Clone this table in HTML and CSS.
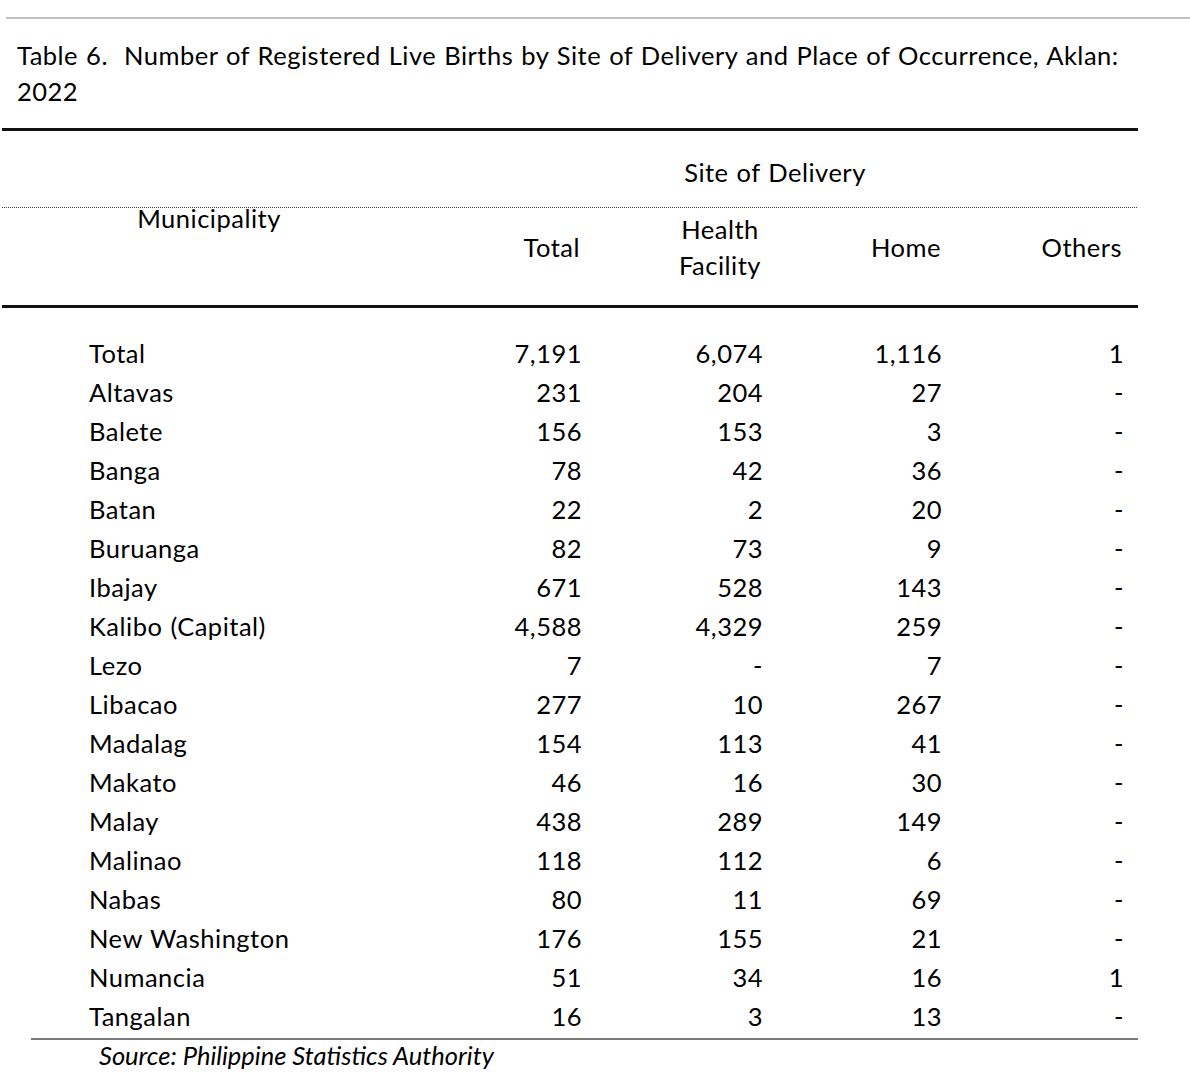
FILE: index.html
```html
<!DOCTYPE html>
<html lang="en">
<head>
<meta charset="utf-8">
<title>Table 6. Registered Live Births, Aklan 2022</title>
<link rel="stylesheet" href="styles.css">
</head>
<body>
<div class="page">
  <div class="top-rule"></div>
  <h1 class="title">Table 6.&nbsp; Number of Registered Live Births by Site of Delivery and Place of Occurrence, Aklan:<br>2022</h1>
  <div class="table">
    <div class="head">
      <div class="h-muni">Municipality</div>
      <div class="h-group">Site of Delivery</div>
      <div class="h-col h-total">Total</div>
      <div class="h-col h-health">Health<br>Facility</div>
      <div class="h-col h-home">Home</div>
      <div class="h-col h-others">Others</div>
    </div>
    <div class="body">
      <div class="row"><span class="name">Total</span><span class="c1">7,191</span><span class="c2">6,074</span><span class="c3">1,116</span><span class="c4">1</span></div>
      <div class="row"><span class="name">Altavas</span><span class="c1">231</span><span class="c2">204</span><span class="c3">27</span><span class="c4">-</span></div>
      <div class="row"><span class="name">Balete</span><span class="c1">156</span><span class="c2">153</span><span class="c3">3</span><span class="c4">-</span></div>
      <div class="row"><span class="name">Banga</span><span class="c1">78</span><span class="c2">42</span><span class="c3">36</span><span class="c4">-</span></div>
      <div class="row"><span class="name">Batan</span><span class="c1">22</span><span class="c2">2</span><span class="c3">20</span><span class="c4">-</span></div>
      <div class="row"><span class="name">Buruanga</span><span class="c1">82</span><span class="c2">73</span><span class="c3">9</span><span class="c4">-</span></div>
      <div class="row"><span class="name">Ibajay</span><span class="c1">671</span><span class="c2">528</span><span class="c3">143</span><span class="c4">-</span></div>
      <div class="row"><span class="name">Kalibo (Capital)</span><span class="c1">4,588</span><span class="c2">4,329</span><span class="c3">259</span><span class="c4">-</span></div>
      <div class="row"><span class="name">Lezo</span><span class="c1">7</span><span class="c2">-</span><span class="c3">7</span><span class="c4">-</span></div>
      <div class="row"><span class="name">Libacao</span><span class="c1">277</span><span class="c2">10</span><span class="c3">267</span><span class="c4">-</span></div>
      <div class="row"><span class="name">Madalag</span><span class="c1">154</span><span class="c2">113</span><span class="c3">41</span><span class="c4">-</span></div>
      <div class="row"><span class="name">Makato</span><span class="c1">46</span><span class="c2">16</span><span class="c3">30</span><span class="c4">-</span></div>
      <div class="row"><span class="name">Malay</span><span class="c1">438</span><span class="c2">289</span><span class="c3">149</span><span class="c4">-</span></div>
      <div class="row"><span class="name">Malinao</span><span class="c1">118</span><span class="c2">112</span><span class="c3">6</span><span class="c4">-</span></div>
      <div class="row"><span class="name">Nabas</span><span class="c1">80</span><span class="c2">11</span><span class="c3">69</span><span class="c4">-</span></div>
      <div class="row"><span class="name">New Washington</span><span class="c1">176</span><span class="c2">155</span><span class="c3">21</span><span class="c4">-</span></div>
      <div class="row"><span class="name">Numancia</span><span class="c1">51</span><span class="c2">34</span><span class="c3">16</span><span class="c4">1</span></div>
      <div class="row"><span class="name">Tangalan</span><span class="c1">16</span><span class="c2">3</span><span class="c3">13</span><span class="c4">-</span></div>
    </div>
  </div>
  <p class="source">Source: Philippine Statistics Authority</p>
</div>
</body>
</html>
```
FILE: styles.css
```css
html, body {
  margin: 0;
  padding: 0;
  background: #ffffff;
}

body {
  font-family: "Lato", "Open Sans", sans-serif;
  font-size: 25.5px;
  color: #000000;
}

.page {
  width: 1190px;
}

.top-rule {
  margin: 17px 0 0 6px;
  height: 2px;
  background: #c2c2c2;
}

.title {
  margin: 18px 0 0 17px;
  font-size: 25.5px;
  font-weight: normal;
  line-height: 36px;
  letter-spacing: 0.5px;
  word-spacing: 1px;
  white-space: nowrap;
}

.table {
  margin: 19px 0 0 2px;
  width: 1136px;
  border-top: 3px solid #111111;
  letter-spacing: 0.5px;
  word-spacing: 1px;
}

.head {
  display: grid;
  grid-template-columns: 414px 217px 186px 174px 145px;
  grid-template-rows: 77px 97px;
  line-height: 36px;
  border-bottom: 3px solid #111111;
  background-image: repeating-linear-gradient(90deg, #444444 0 1px, transparent 1px 2px);
  background-size: 100% 1px;
  background-position: 0 76px;
  background-repeat: no-repeat;
}

.h-muni {
  grid-column: 1;
  grid-row: 1 / 3;
  align-self: center;
  text-align: center;
}

.h-group {
  grid-column: 2 / 6;
  grid-row: 1;
  padding-top: 23px;
  padding-right: 4px;
  text-align: center;
}

.h-col {
  grid-row: 2;
  display: flex;
  align-items: center;
  padding-bottom: 20px;
}

.h-total {
  justify-content: flex-end;
  padding-right: 53px;
}

.h-health {
  justify-content: center;
  text-align: center;
  padding-right: 12px;
}

.h-home {
  justify-content: center;
}

.h-others {
  justify-content: flex-end;
  padding-right: 16px;
}

.body {
  margin-left: 29px;
  width: 1107px;
  padding: 26px 0 2px 0;
  border-bottom: 2px solid #7a7a7a;
}

.row {
  display: grid;
  grid-template-columns: 385px 217px 186px 174px 145px;
  line-height: 39px;
  height: 39px;
}

.row span {
  text-align: right;
  white-space: nowrap;
}

.row .name {
  text-align: left;
  padding-left: 58px;
}

.row .c1 { padding-right: 51px; }
.row .c2 { padding-right: 56px; }
.row .c3 { padding-right: 51px; }
.row .c4 { padding-right: 14px; }

.source {
  margin: 0 0 0 99px;
  font-style: italic;
  line-height: 30px;
}
```
